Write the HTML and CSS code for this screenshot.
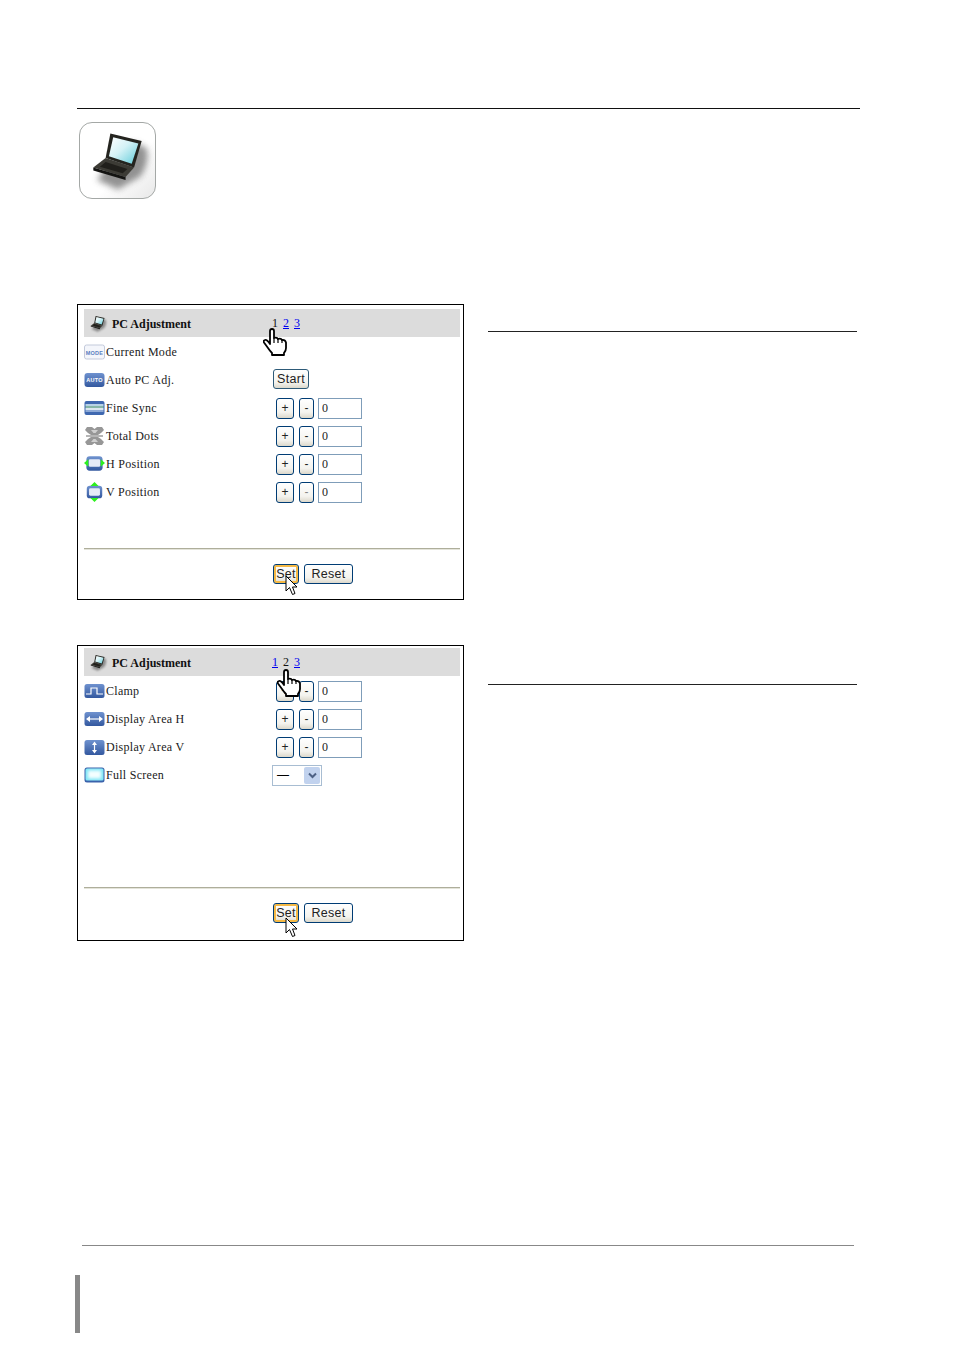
FILE: index.html
```html
<!DOCTYPE html>
<html lang="en">
<head>
<meta charset="utf-8">
<title>PC Adjustment</title>
<link rel="stylesheet" href="styles.css">
</head>
<body>
<svg class="defs" width="0" height="0" aria-hidden="true">
  <defs>
    <linearGradient id="blue" x1="0" y1="0" x2="0" y2="1"><stop offset="0" stop-color="#6f92cf"/><stop offset="1" stop-color="#33589f"/></linearGradient>
    <linearGradient id="screen" x1="0" y1="0" x2="1" y2="1"><stop offset="0" stop-color="#ffffff"/><stop offset=".45" stop-color="#d4f2f6"/><stop offset="1" stop-color="#5fcbd9"/></linearGradient>
    <filter id="blur" x="-30%" y="-30%" width="160%" height="160%"><feGaussianBlur stdDeviation="3.500"/></filter>
    <filter id="glow" x="-30%" y="-30%" width="160%" height="160%"><feGaussianBlur stdDeviation="1.500"/></filter>
    <symbol id="laptop" viewBox="0 0 78 78">
      <path d="M56 20 L70 26 Q74 40 64 56 L40 70 L18 60 L28 46 Z" fill="#777" opacity=".8" filter="url(#blur)"/>
      <path d="M32 11 L65 19 L57 47 L27 37 Z" fill="#24241f"/>
      <path d="M35 15 L61.500 21.500 L54.500 43 L30.500 35 Z" fill="url(#screen)"/>
      <path d="M27 37 L57 47 L48 57 L14 47 Z" fill="#3c3b35"/>
      <path d="M27 41 L50 48.500 L45 53 L21 46 Z" fill="#201f1b"/>
      <path d="M14 47 L48 57 L48 60 L14 50 Z" fill="#141412"/>
    </symbol>
    <symbol id="i-mode" viewBox="0 0 21 16">
      <rect x=".5" y="1" width="20" height="14" rx="2" fill="#f4f6fb" stroke="#c3cadb"/>
      <text x="10.5" y="10.500" text-anchor="middle" class="icon-label icon-label-blue">MODE</text>
    </symbol>
    <symbol id="i-auto" viewBox="0 0 21 16">
      <rect x=".5" y="1" width="20" height="14" rx="3" fill="url(#blue)"/>
      <text x="10.5" y="10" text-anchor="middle" class="icon-label icon-label-white">AUTO</text>
    </symbol>
    <symbol id="i-sync" viewBox="0 0 21 16">
      <rect x=".5" y="1" width="20" height="14" rx="2" fill="#3f68b0"/>
      <rect x="1.500" y="4" width="18" height="2" fill="#b7d2e6"/>
      <rect x="1.500" y="6" width="18" height="2" fill="#86b6a8"/>
      <rect x="1.500" y="8" width="18" height="2" fill="#dbe6ef"/>
      <rect x="1.500" y="10" width="18" height="2" fill="#8da9d6"/>
    </symbol>
    <symbol id="i-dots" viewBox="0 0 21 20">
      <path d="M3 1 H8 L10.500 3 L13 1 H18 L20 4 L17 7 L14 9 H7 L4 7 L1 4 Z M7 11 H14 L17 13 L20 16 L18 19 H13 L10.500 17 L8 19 H3 L1 16 L4 13 Z" fill="#979797"/>
      <rect x="2" y="9" width="17" height="2" fill="#b5b5b5"/>
      <path d="M7 4 H14 L11.500 7 H9.500 Z M9.500 13 H11.500 L14 16 H7 Z" fill="#cfcfcf"/>
    </symbol>
    <symbol id="i-hpos" viewBox="0 0 22 20">
      <rect x="2.500" y="2" width="17" height="15" rx="3.500" fill="url(#blue)"/>
      <rect x="5" y="5" width="12" height="8" rx="1.500" fill="#e6ebf8"/>
      <path d="M0 9 L4.500 5 V13 Z M22 9 L17.500 5 V13 Z" fill="#2df01f"/>
    </symbol>
    <symbol id="i-vpos" viewBox="0 0 22 22">
      <rect x="2.500" y="4" width="17" height="14" rx="3.500" fill="url(#blue)"/>
      <rect x="5" y="7" width="12" height="8" rx="1.500" fill="#e6ebf8"/>
      <path d="M11 0 L15.500 4.500 H6.500 Z M11 22 L15.500 17.500 H6.500 Z" fill="#2df01f"/>
    </symbol>
    <symbol id="i-clamp" viewBox="0 0 21 16">
      <rect x=".5" y="1" width="20" height="14" rx="2.500" fill="url(#blue)"/>
      <path d="M2 11 H7 V5 H13 V11 H19" fill="none" stroke="#fff" stroke-width="1.200"/>
    </symbol>
    <symbol id="i-areah" viewBox="0 0 21 16">
      <rect x=".5" y="1" width="20" height="14" rx="2.500" fill="url(#blue)"/>
      <path d="M5 8 H16" stroke="#fff" stroke-width="1.200"/>
      <path d="M2 8 L6 5 V11 Z M19 8 L15 5 V11 Z" fill="#fff"/>
    </symbol>
    <symbol id="i-areav" viewBox="0 0 21 16">
      <rect x=".5" y="1" width="20" height="15" rx="2.500" fill="url(#blue)"/>
      <path d="M10.500 5 V12" stroke="#fff" stroke-width="1.200"/>
      <path d="M10.500 2.500 L13 6 H8 Z M10.500 14.500 L13 11 H8 Z" fill="#fff"/>
    </symbol>
    <symbol id="i-full" viewBox="0 0 21 16">
      <rect x=".5" y=".5" width="20" height="15" rx="2.500" fill="#3a62ab"/>
      <rect x="1.500" y="1.500" width="18" height="12" rx="1.500" fill="#7fe6f6"/>
      <rect x="4" y="3.500" width="13" height="8" fill="#f4feff" filter="url(#glow)"/>
    </symbol>
    <symbol id="hand" viewBox="0 0 24 28" preserveAspectRatio="none">
      <path d="M7 3 Q7 1 9 1 Q11 1 11 3 V10 Q14 9 15 11 Q18 10 19 12 Q22 11.500 23 14.500 V20 Q23 23 21 25 V27 H9 V25 Q7 23 5 20 L1 14.500 Q0 12.500 2 12 Q4 11.500 7 16 Z" fill="#fff" stroke="#000" stroke-width="1.800" stroke-linejoin="round"/>
      <path d="M11 10 V15 M15 11 V15 M19 12 V15" fill="none" stroke="#000" stroke-width="1.200"/>
    </symbol>
    <symbol id="arrow" viewBox="0 0 13 21">
      <path d="M1 1 V16 L4.500 12.500 L7.500 19.500 L10 18.500 L7.500 12 H12 Z" fill="#fff" stroke="#000" stroke-linejoin="round"/>
    </symbol>
  </defs>
</svg>

<main class="page">
  <div class="top-rule"></div>
  <div class="tile"><svg class="tile-art"><use href="#laptop"/></svg></div>

  <section class="block block-one">
    <div class="panel">
      <div class="band">
        <span class="band-title"><svg class="band-icon"><use href="#laptop"/></svg><b>PC Adjustment</b></span>
        <span class="pager"><span>1</span><a href="#p2">2</a><a href="#p3">3</a></span>
      </div>
      <div class="rows">
        <div class="row"><span class="label"><svg class="ico"><use href="#i-mode"/></svg>Current Mode</span></div>
        <div class="row"><span class="label"><svg class="ico"><use href="#i-auto"/></svg>Auto PC Adj.</span><button class="btn btn-start">Start</button></div>
        <div class="row"><span class="label"><svg class="ico"><use href="#i-sync"/></svg>Fine Sync</span><div class="stepper"><button class="step">+</button><button class="step step-minus">-</button><input class="num" value="0"></div></div>
        <div class="row"><span class="label"><svg class="ico"><use href="#i-dots"/></svg>Total Dots</span><div class="stepper"><button class="step">+</button><button class="step step-minus">-</button><input class="num" value="0"></div></div>
        <div class="row"><span class="label"><svg class="ico"><use href="#i-hpos"/></svg>H Position</span><div class="stepper"><button class="step">+</button><button class="step step-minus">-</button><input class="num" value="0"></div></div>
        <div class="row"><span class="label"><svg class="ico"><use href="#i-vpos"/></svg>V Position</span><div class="stepper"><button class="step">+</button><button class="step step-minus step-dim">-</button><input class="num" value="0"></div></div>
      </div>
      <div class="foot">
        <button class="btn btn-set">Set</button><button class="btn btn-reset">Reset</button>
      </div>
      <svg class="cursor hand-one"><use href="#hand"/></svg>
      <svg class="cursor arrow-one"><use href="#arrow"/></svg>
    </div>
    <div class="side side-one"></div>
  </section>

  <section class="block block-two">
    <div class="panel panel-two">
      <div class="band">
        <span class="band-title"><svg class="band-icon"><use href="#laptop"/></svg><b>PC Adjustment</b></span>
        <span class="pager"><a href="#p1">1</a><span>2</span><a href="#p3">3</a></span>
      </div>
      <div class="rows">
        <div class="row"><span class="label"><svg class="ico"><use href="#i-clamp"/></svg>Clamp</span><div class="stepper"><button class="step">+</button><button class="step step-minus">-</button><input class="num" value="0"></div></div>
        <div class="row"><span class="label"><svg class="ico"><use href="#i-areah"/></svg>Display Area H</span><div class="stepper"><button class="step">+</button><button class="step step-minus">-</button><input class="num" value="0"></div></div>
        <div class="row"><span class="label"><svg class="ico"><use href="#i-areav"/></svg>Display Area V</span><div class="stepper"><button class="step">+</button><button class="step step-minus">-</button><input class="num" value="0"></div></div>
        <div class="row"><span class="label"><svg class="ico"><use href="#i-full"/></svg>Full Screen</span>
          <div class="select"><span class="select-value">—</span><span class="select-arrow"><svg width="9" height="7" viewBox="0 0 9 7"><path d="M1 1.500 L4.500 5 L8 1.500" fill="none" stroke="#4d6185" stroke-width="2"/></svg></span></div>
        </div>
      </div>
      <div class="foot">
        <button class="btn btn-set">Set</button><button class="btn btn-reset">Reset</button>
      </div>
      <svg class="cursor hand-two"><use href="#hand"/></svg>
      <svg class="cursor arrow-two"><use href="#arrow"/></svg>
    </div>
    <div class="side side-two"></div>
  </section>

  <div class="bottom-rule"></div>
  <div class="edge-bar"></div>
</main>
</body>
</html>
```

FILE: styles.css
```css
* { box-sizing: border-box; }
html, body { margin: 0; padding: 0; background: #fff; }
body { height: 1351px; overflow: hidden; font-family: "Liberation Serif", serif; color: #111; }
.defs { position: absolute; }

.page { padding: 108px 0 0 77px; width: 954px; }
.top-rule { width: 783px; height: 1px; background: #111; }

.tile {
  width: 77px; height: 77px; margin: 13px 0 0 2px;
  border: 1.5px solid #a4a8a6; border-radius: 13px;
  background: linear-gradient(135deg, #fff 60%, #e8e8e8);
  overflow: hidden;
}
.tile-art { display: block; width: 74px; height: 74px; }

.block { display: flex; align-items: flex-start; gap: 24px; }
.block-one { margin-top: 105px; }
.block-two { margin-top: 45px; }

.panel {
  position: relative; width: 387px; height: 296px;
  border: 1px solid #000;
  padding: 4px 3px 0 6px;
  display: flex; flex-direction: column;
}
.panel-two { padding-top: 2px; }

.band {
  height: 28px; flex: none; background: #dcdcdc;
  display: flex; align-items: center;
  padding-top: 2px;
}
.band-title {
  width: 188px; flex: none; display: flex; align-items: center;
  padding-left: 3px; font-size: 12px;
}
.band-icon { width: 21px; height: 21px; margin-right: 4px; margin-top: -2px; flex: none; }
.pager { display: flex; gap: 5px; font-size: 12px; margin-top: -1px; }
.pager a { color: #0000ee; }

.rows { flex: 1; padding-top: 1px; }
.row { height: 28px; display: flex; align-items: center; }
.label {
  width: 189px; flex: none; display: flex; align-items: center;
  font-size: 12px; letter-spacing: .28px; color: #1a1a1a;
}
.ico { width: 21px; height: 20px; margin-right: 1px; flex: none; }

.icon-label { font-family: "Liberation Sans", sans-serif; font-size: 5.500px; font-weight: 700; }
.icon-label-blue { fill: #5a7fc0; }
.icon-label-white { fill: #fff; }

.btn, .step {
  font-family: "Liberation Sans", sans-serif; color: #222;
  border: 1px solid #003c74; border-radius: 3px; padding: 0;
  background: linear-gradient(#fff, #f4f3ee 70%, #dcd8cb);
}
.btn { height: 20px; font-size: 12.500px; letter-spacing: .3px; }
.btn-start { width: 36px; border-color: #2d5a78; margin-top: -2px; }
.btn-set { width: 26px; box-shadow: inset 0 0 0 2px #f5b945; }
.btn-reset { width: 49px; margin-left: 5px; }

.stepper { display: flex; gap: 5px; margin-left: 3px; }
.step { width: 18px; height: 21px; font-size: 12px; }
.step-minus { width: 15px; }
.step-dim { color: #888; }
.num {
  width: 44px; height: 21px; margin-left: -1px; padding: 0 0 0 3px;
  border: 1px solid #7f9db9; font-family: "Liberation Serif", serif; font-size: 12px; color: #222;
}

.select {
  display: flex; width: 50px; height: 21px; margin-left: -1px;
  border: 1px solid #a8bdd2; background: #fff; padding: 1px;
  justify-content: space-between; align-items: stretch;
}
.select-value { font-family: "Liberation Sans", sans-serif; font-size: 12px; padding-left: 3px; line-height: 16px; color: #000; }
.select-arrow {
  width: 16px; background: #c1d2ee; border-radius: 2px;
  display: flex; align-items: center; justify-content: center;
}

.foot {
  height: 51px; flex: none; border-top: 1px solid #aeae9b;
  box-shadow: inset 0 1px #e4e4da;
  padding: 15px 0 0 189px; display: flex; align-items: flex-start;
}
.panel-two .foot { height: 53px; }

.side { width: 369px; height: 1px; background: #222; }
.side-one { margin-top: 27px; }
.side-two { margin-top: 39px; }

.cursor { position: absolute; }
.hand-one { left: 185px; top: 23px; width: 24px; height: 28px; }
.hand-two { left: 199px; top: 23px; width: 24px; height: 28px; }
.arrow-one { left: 207px; top: 270px; width: 13px; height: 21px; }
.arrow-two { left: 207px; top: 271px; width: 13px; height: 21px; }

.bottom-rule { width: 772px; height: 1px; margin: 304px 0 0 5px; background: #888; }
.edge-bar { width: 5px; height: 58px; margin: 29px 0 0 -2px; background: #888; }
```
